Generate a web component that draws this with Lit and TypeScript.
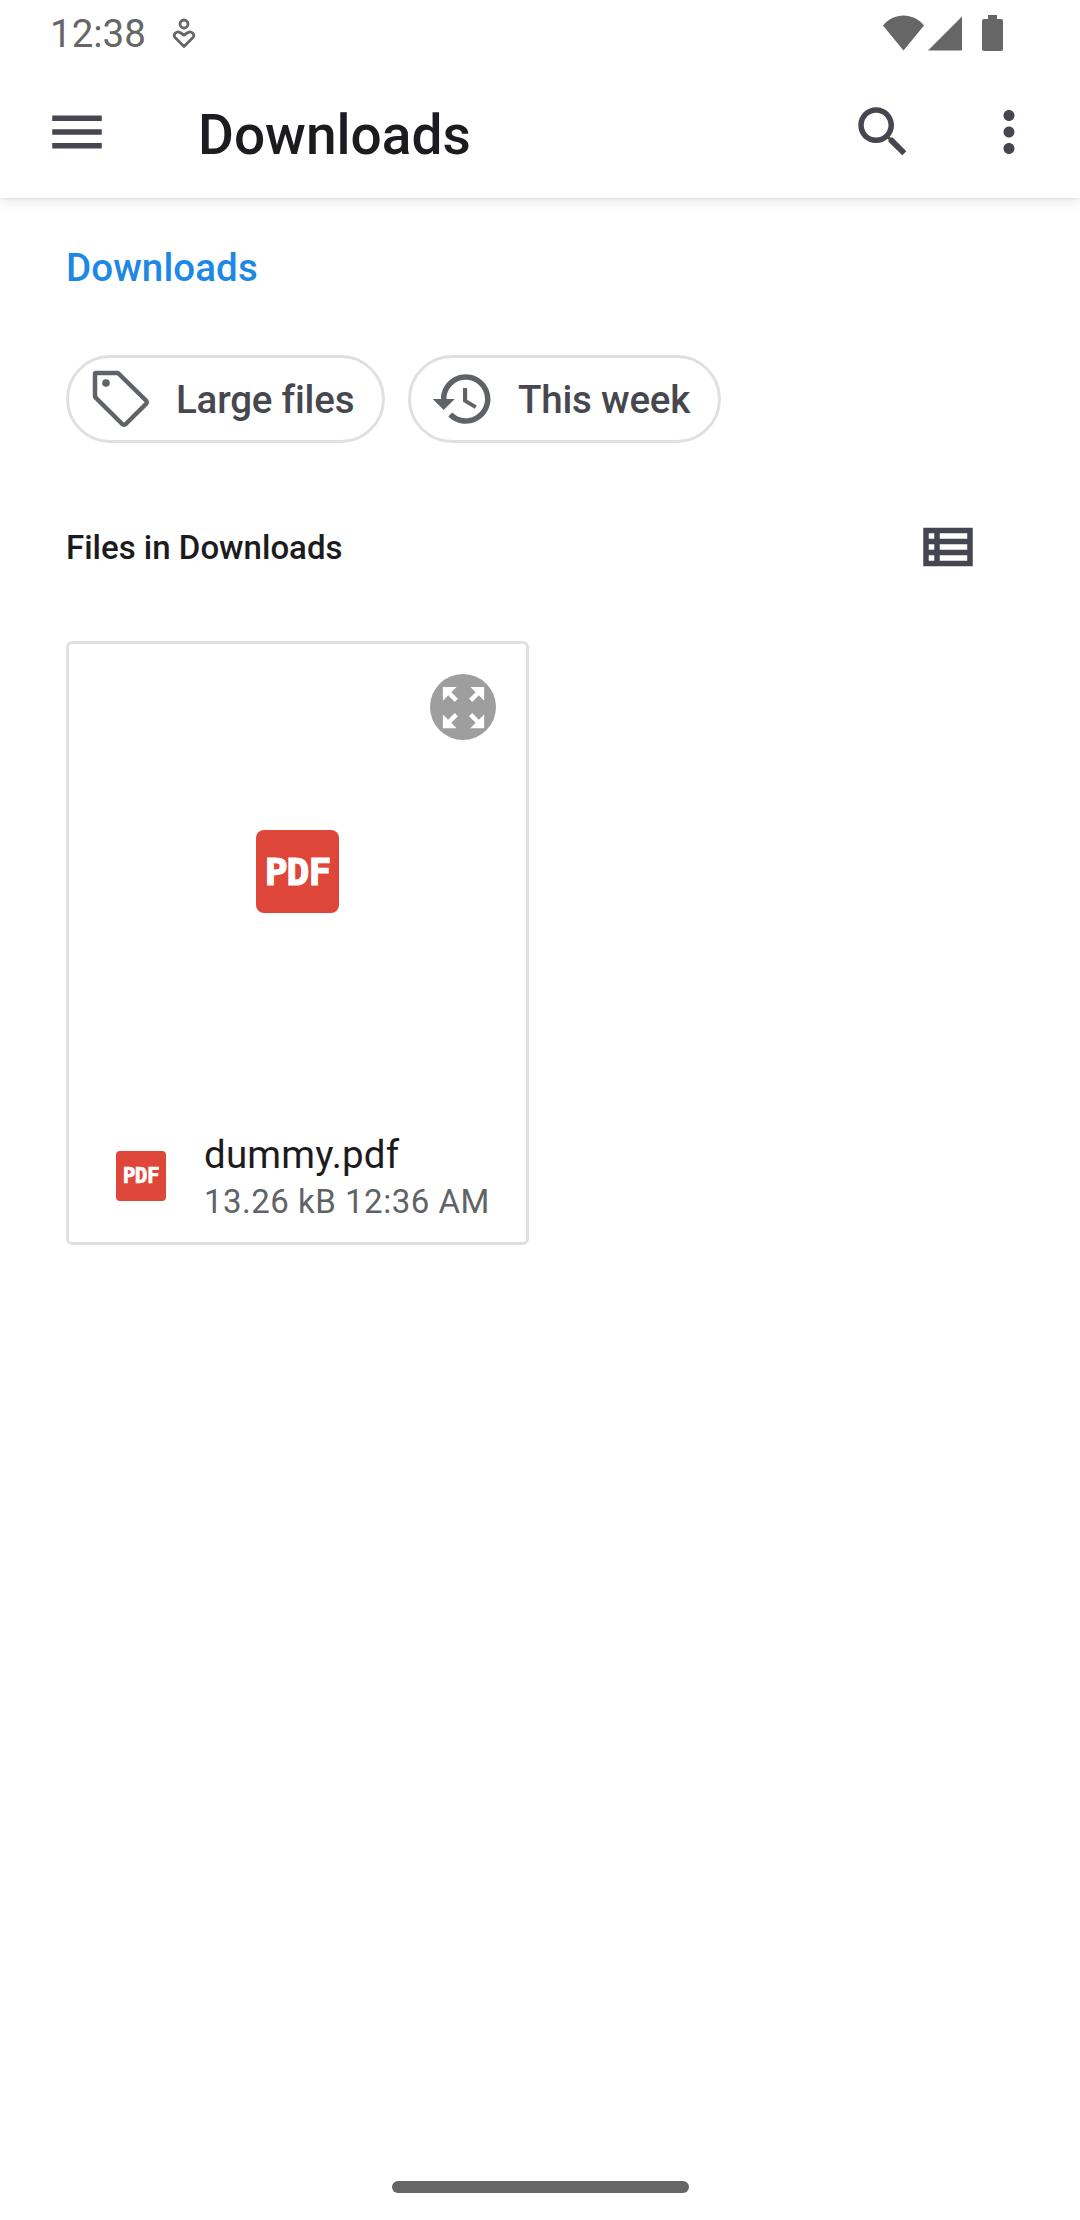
import { LitElement, html, css } from "lit";
import { customElement } from "lit/decorators.js";

const icon = (d: string, cls = "") => html`<svg class="ic ${cls}" viewBox="0 0 24 24"><path d="${d}"></path></svg>`;

@customElement("app-root")
export class AppRoot extends LitElement {
  static styles = css`
    :host { display: flex; flex-direction: column; width: 1080px; height: 2220px; background: #fff; font-family: Roboto, sans-serif; overflow: hidden; }
    .status { height: 66px; display: flex; align-items: center; padding: 0 77px 0 50px; color: #666; font-size: 38.5px; flex: none; background: #fff; position: relative; z-index: 2; }
    .status .time { line-height: 66px; padding-top: 2px; }
    .status svg { display: block; fill: #666; }
    .notif { width: 24px; height: 32px; margin-left: 26px; }
    .notif-line { fill: none; stroke: #666; stroke-width: 2.800; stroke-linejoin: round; }
    .sysgap { flex: 1; }
    .toolbar { height: 132px; display: flex; align-items: center; padding-left: 44px; background: #fff; box-shadow: 0 3px 14px rgba(0,0,0,.1), 0 1px 2px rgba(0,0,0,.08); position: relative; z-index: 1; flex: none; }
    .ic { width: 66px; height: 66px; display: block; fill: #464651; flex: none; }
    .title { font-size: 55px; font-weight: 500; color: #1c1c20; margin-left: 88px; padding-top: 5px; flex: 1; }
    .more { margin: 0 38px 0 60px; }
    .crumb { margin: 45px 0 0 66px; font-size: 38.5px; font-weight: 500; color: #1e88e5; line-height: 50px; letter-spacing: .1px; }
    .chips { display: flex; gap: 23px; margin: 62px 0 0 66px; }
    .chip { height: 88px; box-sizing: border-box; border: 3px solid #e0e0e0; border-radius: 44px; display: flex; align-items: center; font-size: 38.5px; font-weight: 500; color: #47474f; letter-spacing: -.2px; }
    .chip svg { display: block; flex: none; }
    .chip.a { width: 319px; padding-left: 18px; }
    .chip.b { width: 313px; padding-left: 19px; }
    .chip.a span { margin-left: 23px; }
    .chip.b span { margin-left: 22px; }
    .hist { fill: #5f6368; }
    .tag-line { fill: none; stroke: #5f6368; stroke-width: 4.500; stroke-linejoin: round; }
    .tag-dot { fill: #5f6368; }
    .section { display: flex; align-items: center; height: 66px; margin: 71px 0 0 66px; font-size: 33px; font-weight: 500; color: #1c1c20; }
    .section span { flex: 1; }
    .section .ic { margin-right: 99px; }
    .card { width: 463px; height: 604px; box-sizing: border-box; margin: 61px 0 0 66px; border: 3px solid #e0e0e0; border-radius: 6px; display: flex; flex-direction: column; position: relative; }
    .expand { position: absolute; left: 361px; top: 30px; width: 66px; height: 66px; border-radius: 50%; background: #9e9e9e; display: flex; align-items: center; justify-content: center; }
    .expand svg { width: 55px; height: 55px; fill: #fff; display: block; }
    .thumb { height: 455px; display: flex; align-items: center; justify-content: center; flex: none; }
    .pdf { background: #de4639; color: #fff; display: flex; align-items: center; justify-content: center; font-family: "DejaVu Sans Mono", monospace; font-weight: 700; flex: none; }
    .pdf.big { width: 82.5px; height: 82.5px; border-radius: 8px; font-size: 38px; letter-spacing: -1px; -webkit-text-stroke: 1.2px #fff; }
    .pdf.small { width: 50px; height: 50px; border-radius: 4px; font-size: 21px; letter-spacing: -.4px; -webkit-text-stroke: .7px #fff; }
    .foot { display: flex; align-items: center; padding: 10px 0 0 47px; flex: 1; }
    .meta { margin: 4px 0 0 38px; white-space: nowrap; }
    .name { font-size: 38.5px; color: #1c1c20; line-height: 48px; letter-spacing: .2px; }
    .sub { font-size: 33px; color: #5f6368; line-height: 46px; letter-spacing: .5px; }
    .fill { flex: 1; }
    .pill { width: 297px; height: 11.5px; border-radius: 6px; background: #666; margin: 0 auto 27.5px; flex: none; }
  `;

  render() {
    return html`
      <div class="status">
        <span class="time">12:38</span>
        <svg class="notif" viewBox="0 0 24 32"><circle class="notif-line" cx="12" cy="7" r="4"></circle><path class="notif-line" d="M12 29.500 3 20.500C.5 17 5 13.500 8 15.500L12 18l4-2.500C19 13.500 23.500 17 21 20.500z"></path></svg>
        <div class="sysgap"></div>
        <svg width="120" height="36" viewBox="0 0 120 36"><path d="M0 10.500C5 4 13 .5 20.500.5S36 4 41 10.500L20.500 35.500z"></path><path d="M79 1.500V35.500H45z"></path><path d="M102 4h4V0h9v4h4a2 2 0 0 1 2 2v28a2 2 0 0 1-2 2h-17a2 2 0 0 1-2-2V6a2 2 0 0 1 2-2z" transform="translate(-1)"></path></svg>
      </div>
      <div class="toolbar">
        ${icon("M3 18h18v-2H3v2zm0-5h18v-2H3v2zm0-7v2h18V6H3z")}
        <div class="title">Downloads</div>
        ${icon("M15.500 14h-.790l-.280-.270C15.410 12.590 16 11.110 16 9.500 16 5.910 13.090 3 9.500 3S3 5.910 3 9.500 5.910 16 9.500 16c1.610 0 3.090-.590 4.230-1.570l.270.280v.790l5 4.990L20.490 19l-4.990-5zm-6 0C7.010 14 5 11.990 5 9.500S7.010 5 9.500 5 14 7.010 14 9.500 11.990 14 9.500 14z")}
        ${icon("M12 8c1.100 0 2-.900 2-2s-.900-2-2-2-2 .900-2 2 .900 2 2 2zm0 2c-1.100 0-2 .900-2 2s.900 2 2 2 2-.900 2-2-.900-2-2-2zm0 6c-1.100 0-2 .900-2 2s.900 2 2 2 2-.900 2-2-.900-2-2-2z", "more")}
      </div>
      <div class="crumb">Downloads</div>
      <div class="chips">
        <div class="chip a">
          <svg width="66" height="66" viewBox="0 0 66 66"><path class="tag-line" d="M9 7H30a2.500 2.500 0 0 1 2 1L59 34.500a2.500 2.500 0 0 1 0 3.500L38.800 58a2.500 2.500 0 0 1-3.600 0L9 32a3 3 0 0 1-1-2V8a1 1 0 0 1 1-1z"></path><circle class="tag-dot" cx="19" cy="17" r="3.800"></circle></svg>
          <span>Large files</span>
        </div>
        <div class="chip b">
          <svg class="ic hist" viewBox="0 0 24 24"><path d="M13 3c-4.970 0-9 4.030-9 9H1l3.890 3.890.07.140L9 12H6c0-3.870 3.130-7 7-7s7 3.130 7 7-3.130 7-7 7c-1.930 0-3.680-.790-4.940-2.060l-1.420 1.420C8.270 19.990 10.510 21 13 21c4.970 0 9-4.030 9-9s-4.030-9-9-9zm-1 5v5l4.280 2.540.720-1.210-3.500-2.080V8H12z"></path></svg>
          <span>This week</span>
        </div>
      </div>
      <div class="section">
        <span>Files in Downloads</span>
        ${icon("M3 5v14h18V5H3zm4 2v2H5V7h2zm-2 6v-2h2v2H5zm0 2h2v2H5v-2zm14 2H9v-2h10v2zm0-4H9v-2h10v2zm0-4H9V7h10v2z")}
      </div>
      <div class="card">
        <div class="expand"><svg viewBox="0 0 24 24"><path d="M15 3l2.300 2.300-2.890 2.870 1.420 1.420L18.700 6.700 21 9V3zM3 9l2.300-2.300 2.870 2.890 1.420-1.420L6.700 5.300 9 3H3zm6 12l-2.300-2.300 2.890-2.870-1.420-1.420L5.300 17.300 3 15v6zm12-6l-2.300 2.300-2.870-2.890-1.420 1.420 2.890 2.870L15 21h6z"></path></svg></div>
        <div class="thumb"><div class="pdf big">PDF</div></div>
        <div class="foot">
          <div class="pdf small">PDF</div>
          <div class="meta">
            <div class="name">dummy.pdf</div>
            <div class="sub">13.26 kB 12:36 AM</div>
          </div>
        </div>
      </div>
      <div class="fill"></div>
      <div class="pill"></div>
    `;
  }
}
